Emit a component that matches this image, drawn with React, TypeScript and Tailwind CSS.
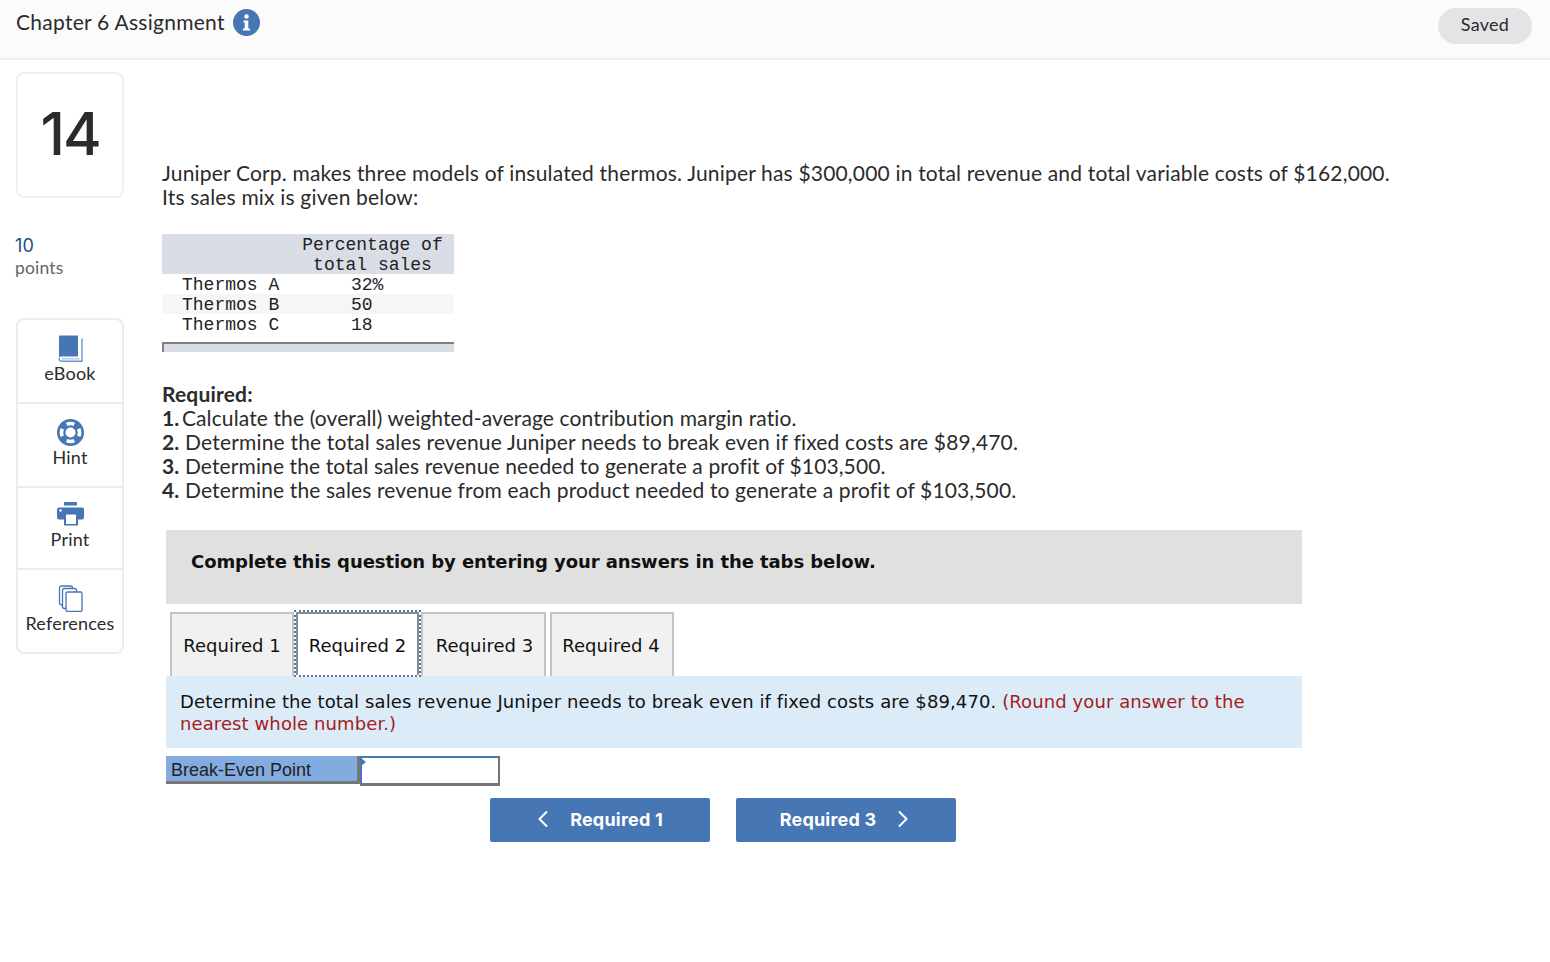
import React from "react";

const BLUE = "#4676b4";

function Book() {
  return (
    <svg width="25" height="27" viewBox="0 0 25 27">
      <path d="M1 1.500A1 1 0 0 1 2 .5h18v21H4c-1.800 0-3 .5-3 2z" fill={BLUE} />
      <path d="M1 23c0 2 1.300 3.300 3 3.300h20V3.500" fill="none" stroke="#6d94c8" strokeWidth="1.400" />
      <path d="M4 23.800h17.500" stroke="#a9c0de" strokeWidth="1.300" />
      <path d="M22 3v21" stroke="#fff" strokeWidth="0.800" />
    </svg>
  );
}
function Hint() {
  return (
    <svg width="27" height="27" viewBox="0 0 27 27">
      <circle cx="13.500" cy="13.500" r="13.500" fill={BLUE} />
      <circle cx="13.500" cy="13.500" r="5" fill="#fff" />
      <g fill="none" stroke="#fff" strokeWidth="3.600">
        <path d="M9.700 5.300a9.200 9.200 0 0 1 7.600 0" />
        <path d="M21.700 9.700a9.200 9.200 0 0 1 0 7.600" />
        <path d="M17.300 21.700a9.200 9.200 0 0 1-7.600 0" />
        <path d="M5.300 17.300a9.200 9.200 0 0 1 0-7.600" />
      </g>
    </svg>
  );
}
function Printer() {
  return (
    <svg width="27" height="24" viewBox="0 0 27 24">
      <rect x="7" y="0" width="13" height="3.500" fill={BLUE} />
      <path d="M2 5.500h23a2 2 0 0 1 2 2v8a2 2 0 0 1-2 2h-4v6H7v-6H2a2 2 0 0 1-2-2v-8a2 2 0 0 1 2-2z" fill={BLUE} />
      <rect x="9" y="12.500" width="10" height="9.500" fill="#fff" />
      <circle cx="3.500" cy="8.500" r="1.300" fill="#fff" />
    </svg>
  );
}
function Refs() {
  return (
    <svg width="25" height="27" viewBox="0 0 25 27" fill="#fff" stroke={BLUE} strokeWidth="1.300">
      <rect x="1.500" y="1" width="13" height="19" rx="2" />
      <rect x="4.500" y="3.500" width="14" height="20" rx="2" />
      <rect x="8" y="7" width="16" height="19.500" rx="1.500" />
    </svg>
  );
}

function Tool({ icon, label, h, pt, last }: { icon: React.ReactNode; label: string; h: string; pt: string; last?: boolean }) {
  return (
    <div className={`flex flex-col items-center ${pt} ${h} ${last ? "" : "border-b-2 border-[#ececec]"}`}>
      <div className="h-[28px] flex items-center justify-center">{icon}</div>
      <div className="text-[18px] tracking-[0.2px] leading-[22px] text-[#2b2b2b]">{label}</div>
    </div>
  );
}

function Tab({ label, w }: { label: string; w: string }) {
  return (
    <div className={`h-[64px] bg-[#f1f1f1] border-2 border-b-0 border-[#c4c4c4] flex items-center justify-center ${w}`}>{label}</div>
  );
}

export default function App() {
  return (
    <div className="font-['Lato',sans-serif] w-[1550px] h-[962px] bg-white text-[#2b2b2b] overflow-hidden tracking-[0.18px]">
      <header className="h-[60px] bg-[#fbfbfb] border-b-2 border-[#f0f0f0] flex items-start justify-between pl-[16px] pr-[18px]">
        <div className="flex items-center h-[44px] gap-[8px]">
          <span className="text-[21px] tracking-[0.27px] text-[#2b2b2b]">Chapter 6 Assignment</span>
          <svg width="27" height="27" viewBox="0 0 27 27">
            <circle cx="13.500" cy="13.500" r="13.500" fill={BLUE} />
            <circle cx="13.500" cy="7.500" r="2.200" fill="#fff" />
            <path d="M10.500 11.500h4.800v8h1.700v2h-7v-2h1.700v-6h-1.200z" fill="#fff" />
          </svg>
        </div>
        <div className="mt-[8px] h-[36px] w-[94px] rounded-[18px] bg-[#e4e3e6] flex items-center justify-center text-[18px] tracking-[0.3px] pb-[4px]">Saved</div>
      </header>

      <div className="flex pl-[16px] pt-[12px]">
        <aside className="w-[108px] shrink-0">
          <div className="h-[126px] rounded-[8px] border-2 border-[#f0f0f0] flex items-center justify-center font-['Inter',sans-serif] font-medium text-[59px] leading-none tracking-[-2px] text-[#2b2b2b] pb-[3px]">14</div>
          <div className="mt-[36px] font-['Inter',sans-serif] text-[18px] leading-[24px] text-[#1f4a86] -ml-[1px]">10</div>
          <div className="text-[17.500px] leading-[20px] text-[#666] -ml-[1px]">points</div>
          <div className="mt-[40px] w-[108px] h-[336px] rounded-[8px] border-2 border-[#ececec]">
            <Tool icon={<Book />} label="eBook" h="h-[84px]" pt="pt-[14px]" />
            <Tool icon={<Hint />} label="Hint" h="h-[84px]" pt="pt-[14px]" />
            <Tool icon={<Printer />} label="Print" h="h-[82px]" pt="pt-[12px]" />
            <Tool icon={<Refs />} label="References" h="h-[82px]" pt="pt-[14px]" last />
          </div>
        </aside>

        <main className="ml-[38px] w-[1300px]">
          <p className="mt-[89px] text-[21px] leading-[24px] w-[1240px]">
            Juniper Corp. makes three models of insulated thermos. Juniper has $300,000 in total revenue and total variable costs of $162,000.
            <br />
            Its sales mix is given below:
          </p>

          <div className="mt-[25px] w-[292px] font-['Liberation_Mono',monospace] text-[18px] leading-[20px] tracking-normal text-[#222]">
            <div className="bg-[#d8dde6] h-[40px] text-center pl-[140px] pr-[11px] pt-[1px]">Percentage of<br />total sales</div>
            <div className="h-[20px] flex pt-[1px]"><span className="pl-[20px] w-[189px]">Thermos A</span><span>32%</span></div>
            <div className="h-[20px] flex pt-[1px] bg-[#f6f6f6]"><span className="pl-[20px] w-[189px]">Thermos B</span><span>50</span></div>
            <div className="h-[20px] flex pt-[1px]"><span className="pl-[20px] w-[189px]">Thermos C</span><span>18</span></div>
            <div className="mt-[8px] h-[10px] bg-[#d8dde6] border-t-2 border-l-2 border-[#7f7f7f]" />
          </div>

          <div className="mt-[30px] text-[21px] leading-[24px]">
            <div className="font-bold">Required:</div>
            <div className="tracking-[0.12px]"><b className="mr-[-3px]">1.</b> Calculate the (overall) weighted-average contribution margin ratio.</div>
            <div><b>2.</b> Determine the total sales revenue Juniper needs to break even if fixed costs are $89,470.</div>
            <div className="tracking-[0.115px]"><b>3.</b> Determine the total sales revenue needed to generate a profit of $103,500.</div>
            <div className="tracking-[0.135px]"><b>4.</b> Determine the sales revenue from each product needed to generate a profit of $103,500.</div>
          </div>

          <div className="font-['DejaVu_Sans',sans-serif] tracking-normal ml-[4px] w-[1136px] text-[#111]">
            <div className="mt-[28px] h-[74px] bg-[#e0e0e0] pl-[25px] pt-[20px] text-[18px] tracking-[-0.08px] leading-[24px] font-bold">
              Complete this question by entering your answers in the tabs below.
            </div>
            <div className="mt-[8px] pl-[4px] flex text-[18px] h-[64px]">
              <Tab label="Required 1" w="w-[124px]" />
              <div className="relative z-10 h-[67px] w-[127px] -mt-[2px] border-2 border-dotted border-[#4676b4] bg-white">
                <div className="h-full border-t-2 border-x-2 border-[#8c8c8c] flex items-center justify-center pt-[2px]">Required 2</div>
              </div>
              <Tab label="Required 3" w="w-[125px] pl-[2px]" />
              <Tab label="Required 4" w="w-[124px] ml-[4px] pr-[2px]" />
            </div>
            <div className="h-[72px] bg-[#dcebf8] px-[14px] pt-[15px] text-[18px] tracking-[0.1px] leading-[22px]">
              Determine the total sales revenue Juniper needs to break even if fixed costs are $89,470. <span className="text-[#a51c1c]">(Round your answer to the nearest whole number.)</span>
            </div>
            <div className="mt-[8px] flex items-start font-['Liberation_Sans',sans-serif]">
              <div className="w-[194px] h-[28px] bg-[#82abe0] border-b-[3px] border-r-[3px] border-[#767676] pl-[5px] text-[18px] leading-[29px] text-[#222]">Break-Even Point</div>
              <div className="relative w-[140px] h-[30px] bg-white border-t-2 border-l-2 border-r-2 border-t-[#4676b4] border-l-[#4676b4] border-r-[#767676] border-b-[3px] border-b-[#767676]">
                <div className="absolute -left-[1px] top-0 w-0 h-0 border-y-[4px] border-y-transparent border-l-[5px] border-l-[#4676b4]" />
              </div>
            </div>
          </div>

          <div className="mt-[12px] ml-[328px] flex gap-[26px] font-['Inter',sans-serif] font-bold text-[18px] tracking-[0.2px] text-white">
            <div className="w-[220px] h-[44px] rounded-[2px] bg-[#4676b4] flex items-center justify-center gap-[21px]">
              <svg width="12" height="18" viewBox="0 0 12 18" fill="none" stroke="#fff" strokeWidth="2" className="-mt-[2px]"><path d="M10 1.500L2.500 9l7.500 7.500" /></svg>
              <span className="pb-[2px]">Required 1</span>
            </div>
            <div className="w-[220px] h-[44px] rounded-[2px] bg-[#4676b4] flex items-center justify-center gap-[21px] pr-[3px]">
              <span className="pb-[2px]">Required 3</span>
              <svg width="12" height="18" viewBox="0 0 12 18" fill="none" stroke="#fff" strokeWidth="2" className="-mt-[2px]"><path d="M2 1.500L9.500 9 2 16.500" /></svg>
            </div>
          </div>
        </main>
      </div>
    </div>
  );
}
